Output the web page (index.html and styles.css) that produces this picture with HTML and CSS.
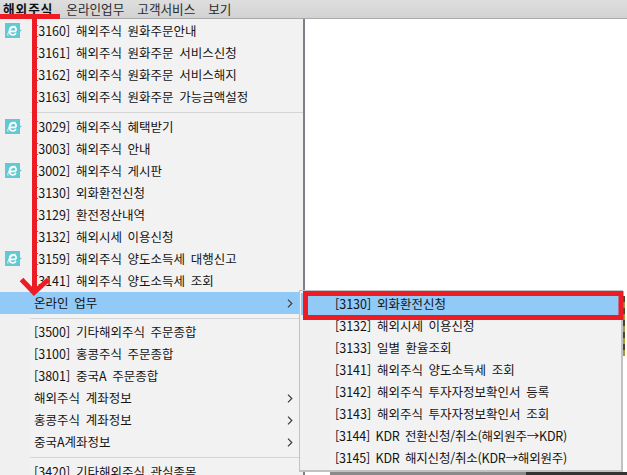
FILE: index.html
```html
<!DOCTYPE html>
<html lang="ko">
<head>
<meta charset="utf-8">
<title>해외주식 메뉴</title>
<link rel="stylesheet" href="styles.css">
</head>
<body>
<svg class="defs" width="0" height="0" aria-hidden="true">
  <symbol id="ie" viewBox="0 0 20 15">
    <rect x="0" y="0" width="15" height="15" fill="#62c9d2"/>
    <path d="M15 6.500l2 1-2 1z" fill="#62c9d2"/>
    <path d="M4.200 8.300h7M4.600 8C4.400 5.400 6 3.600 7.900 3.600c1.900 0 3.300 1.500 3.300 4.200M11 10.100c-.7 1.300-1.800 1.900-3.100 1.900-2 0-3.400-1.500-3.300-4" fill="none" stroke="#fff" stroke-width="1.700"/>
    <path d="M3 12.600c-.9-2.600 2-7 7.600-9.600" fill="none" stroke="#fff" stroke-width="1"/>
  </symbol>
  <symbol id="chev" viewBox="0 0 6 9">
    <path d="M1 .7l3.800 3.800L1 8.300" fill="none" stroke="#3c3c3c" stroke-width="1.200"/>
  </symbol>
</svg>

<nav class="menubar">
  <span class="top top-active">해외주식</span>
  <span class="top">온라인업무</span>
  <span class="top">고객서비스</span>
  <span class="top">보기</span>
</nav>

<main class="desktop"></main>

<ul class="menu menu-main">
  <li class="item"><svg class="icon"><use href="#ie"/></svg>[3160] 해외주식 원화주문안내</li>
  <li class="item">[3161] 해외주식 원화주문 서비스신청</li>
  <li class="item">[3162] 해외주식 원화주문 서비스해지</li>
  <li class="item">[3163] 해외주식 원화주문 가능금액설정</li>
  <li class="sep"></li>
  <li class="item"><svg class="icon"><use href="#ie"/></svg>[3029] 해외주식 혜택받기</li>
  <li class="item">[3003] 해외주식 안내</li>
  <li class="item"><svg class="icon"><use href="#ie"/></svg>[3002] 해외주식 게시판</li>
  <li class="item">[3130] 외화환전신청</li>
  <li class="item">[3129] 환전정산내역</li>
  <li class="item">[3132] 해외시세 이용신청</li>
  <li class="item"><svg class="icon"><use href="#ie"/></svg>[3159] 해외주식 양도소득세 대행신고</li>
  <li class="item">[3141] 해외주식 양도소득세 조회</li>
  <li class="item item-active">온라인 업무<svg class="chev"><use href="#chev"/></svg></li>
  <li class="sep sep-short"></li>
  <li class="item">[3500] 기타해외주식 주문종합</li>
  <li class="item">[3100] 홍콩주식 주문종합</li>
  <li class="item">[3801] 중국A 주문종합</li>
  <li class="item">해외주식 계좌정보<svg class="chev"><use href="#chev"/></svg></li>
  <li class="item">홍콩주식 계좌정보<svg class="chev"><use href="#chev"/></svg></li>
  <li class="item">중국A계좌정보<svg class="chev"><use href="#chev"/></svg></li>
  <li class="sep"></li>
  <li class="item">[3420] 기타해외주식 관심종목</li>
</ul>

<ul class="menu menu-sub">
  <li class="item item-active">[3130] 외화환전신청</li>
  <li class="item">[3132] 해외시세 이용신청</li>
  <li class="item">[3133] 일별 환율조회</li>
  <li class="item">[3141] 해외주식 양도소득세 조회</li>
  <li class="item">[3142] 해외주식 투자자정보확인서 등록</li>
  <li class="item">[3143] 해외주식 투자자정보확인서 조회</li>
  <li class="item item-tight">[3144] KDR 전환신청/취소(해외원주→KDR)</li>
  <li class="item item-tight">[3145] KDR 해지신청/취소(KDR→해외원주)</li>
</ul>

<div class="strip-bottom"></div>
<div class="strip-right"></div>

<svg class="marks" width="627" height="475" aria-hidden="true">
  <path d="M0 16.500h60" class="mark"/>
  <path d="M34.500 18V291" class="mark"/>
  <path d="M21.500 279.500L34 292.500l14.500-13" class="mark"/>
  <rect x="305.500" y="293.500" width="315.500" height="24" class="mark"/>
</svg>
</body>
</html>
```

FILE: styles.css
```css
* { box-sizing: border-box; }

html, body {
  margin: 0;
  padding: 0;
}

body {
  position: relative;
  width: 627px;
  height: 475px;
  overflow: hidden;
  background: #fff;
  color: #141414;
  font-family: "Noto Sans CJK KR", "Noto Sans", sans-serif;
  font-size: 12.5px;
}

.defs { position: absolute; }

.menubar {
  display: flex;
  height: 19px;
  padding-left: 3px;
  gap: 13px;
  align-items: center;
  background: linear-gradient(#dedede, #d2d2d2);
  border-bottom: 1px solid #a9a9a9;
  font-size: 12.6px;
  line-height: 16px;
}

.top { color: #2a2a2a; }
.top-active { font-weight: 700; color: #111; letter-spacing: 1px; }

.desktop { height: 456px; background: #fff; }

.menu {
  position: absolute;
  margin: 0;
  padding: 0;
  list-style: none;
  background: linear-gradient(90deg, #f0f0f0 30px, #f2f2f2 30px);
  word-spacing: 2.2px;
}

.menu-main {
  left: 0;
  top: 19px;
  width: 305px;
  height: 456px;
  padding-top: 1px;
  border-right: 2px solid #7d8087;
  overflow: hidden;
}

.menu-sub {
  left: 299px;
  top: 290px;
  width: 324px;
  height: 182px;
  padding: 2px 1px 0 1px;
  border: 1px solid #c2c2c2;
  border-width: 1px 2px 2px 1px;
}

.item {
  position: relative;
  height: 22px;
  line-height: 22px;
  padding-left: 34px;
  white-space: nowrap;
}

.item-tight { letter-spacing: -0.2px; }

.item-active { background: #91c9f7; }

.icon {
  position: absolute;
  left: 5px;
  top: 3px;
  width: 20px;
  height: 15px;
}

.chev {
  position: absolute;
  left: 287px;
  top: 7px;
  width: 6px;
  height: 9px;
}

.sep {
  height: 8px;
  padding-top: 4px;
  margin-left: 30px;
}

.sep::before {
  content: "";
  display: block;
  height: 1px;
  background: #d5d5d5;
}

.sep-short { height: 7px; }

.strip-bottom {
  position: absolute;
  left: 330px;
  top: 472px;
  width: 297px;
  height: 3px;
  background: linear-gradient(90deg, #8a8a8a 66%, #333 66%);
}

.strip-right {
  position: absolute;
  left: 623px;
  top: 296px;
  width: 2px;
  height: 60px;
  background: repeating-linear-gradient(#4a4636 0 6px, #a8963c 6px 12px);
}

.marks {
  position: absolute;
  left: 0;
  top: 0;
}

.mark {
  fill: none;
  stroke: #ed1c24;
  stroke-width: 5;
}
```
